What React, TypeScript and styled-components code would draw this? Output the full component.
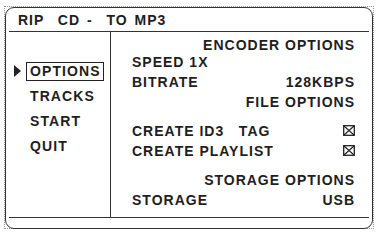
import React from 'react';
import styled, { createGlobalStyle } from 'styled-components';

const menu = ['OPTIONS', 'TRACKS', 'START', 'QUIT'];

const App: React.FC = () => {
  return (
    <>
      <GlobalStyle />
      <Marquee>
        <Frame>
          <Title>RIP  CD -  TO MP3</Title>
          <Body>
            <Menu>
              {menu.map((item, i) => (
                <MenuItem key={item}>
                  <Marker $visible={i === 0} />
                  <MenuLabel $selected={i === 0}>{item}</MenuLabel>
                </MenuItem>
              ))}
            </Menu>
            <Options>
              <Group $top={3}>
                <Header $after={-3}>ENCODER OPTIONS</Header>
                <Row><span>SPEED 1X</span></Row>
                <Row><span>BITRATE</span><span>128KBPS</span></Row>
              </Group>
              <Group $top={0}>
                <Header $after={9}>FILE OPTIONS</Header>
                <Row><span>CREATE ID3&nbsp;&nbsp; TAG</span><CheckBox /></Row>
                <Row><span>CREATE PLAYLIST</span><CheckBox /></Row>
              </Group>
              <Group $top={9.5}>
                <Header $after={0}>STORAGE OPTIONS</Header>
                <Row><span>STORAGE</span><span>USB</span></Row>
              </Group>
            </Options>
          </Body>
        </Frame>
      </Marquee>
    </>
  );
};

export default App;

const CheckBox: React.FC = () => (
  <svg width="12" height="11" viewBox="0 0 12 11">
    <rect x="0.7" y="0.7" width="10.6" height="9.6" fill="none" stroke="#222" strokeWidth="1.3" />
    <path d="M1 1 L11 10 M11 1 L1 10" stroke="#222" strokeWidth="1.1" />
  </svg>
);

// Styled Components
const GlobalStyle = createGlobalStyle`
  body {
    margin: 0;
    background: #fff;
  }
`;

const Marquee = styled.div`
  margin: 6px 0 0 4px;
  width: 368px;
  height: 221px;
  border: 1px dotted #9a9a9a;
`;

const Frame = styled.div`
  box-sizing: border-box;
  width: 368px;
  height: 222px;
  margin-top: -0.5px;
  border: 1.5px solid #333;
  border-radius: 9px;
  background: #fff;
  padding: 0 3px 10px;
  display: flex;
  flex-direction: column;
  font-family: 'Liberation Sans', Arial, sans-serif;
  font-weight: bold;
  color: #1e1e1e;
`;

const Title = styled.div`
  height: 23px;
  line-height: 24px;
  padding-left: 9px;
  font-size: 14px;
  letter-spacing: 1px;
  word-spacing: 2px;
  white-space: pre;
`;

const Body = styled.div`
  flex: 1;
  display: flex;
  border-top: 1.5px solid #333;
  border-bottom: 1.5px solid #333;
`;

const Menu = styled.div`
  width: 102px;
  border-right: 1.5px solid #333;
  padding: 27px 0 0 5px;
  box-sizing: border-box;
`;

const MenuItem = styled.div`
  height: 25px;
  display: flex;
  align-items: center;
`;

const Marker = styled.span<{ $visible: boolean }>`
  width: 0;
  height: 0;
  margin-right: 5px;
  border-top: 6px solid transparent;
  border-bottom: 6px solid transparent;
  border-left: 7px solid ${p => (p.$visible ? '#222' : 'transparent')};
`;

const MenuLabel = styled.span<{ $selected: boolean }>`
  font-size: 14px;
  letter-spacing: 1.1px;
  line-height: 17px;
  padding: 0 2px 0 3px;
  border: 1.5px solid ${p => (p.$selected ? '#222' : 'transparent')};
`;

const Options = styled.div`
  flex: 1;
  padding: 0 14px 0 21px;
  font-size: 14px;
  letter-spacing: 1px;
`;

const Group = styled.div<{ $top: number }>`
  margin-top: ${p => p.$top}px;
`;

const Header = styled.div<{ $after: number }>`
  line-height: 20px;
  text-align: right;
  margin-bottom: ${p => p.$after}px;
`;

const Row = styled.div`
  height: 20px;
  display: flex;
  align-items: center;
  justify-content: space-between;
  white-space: pre;
`;
